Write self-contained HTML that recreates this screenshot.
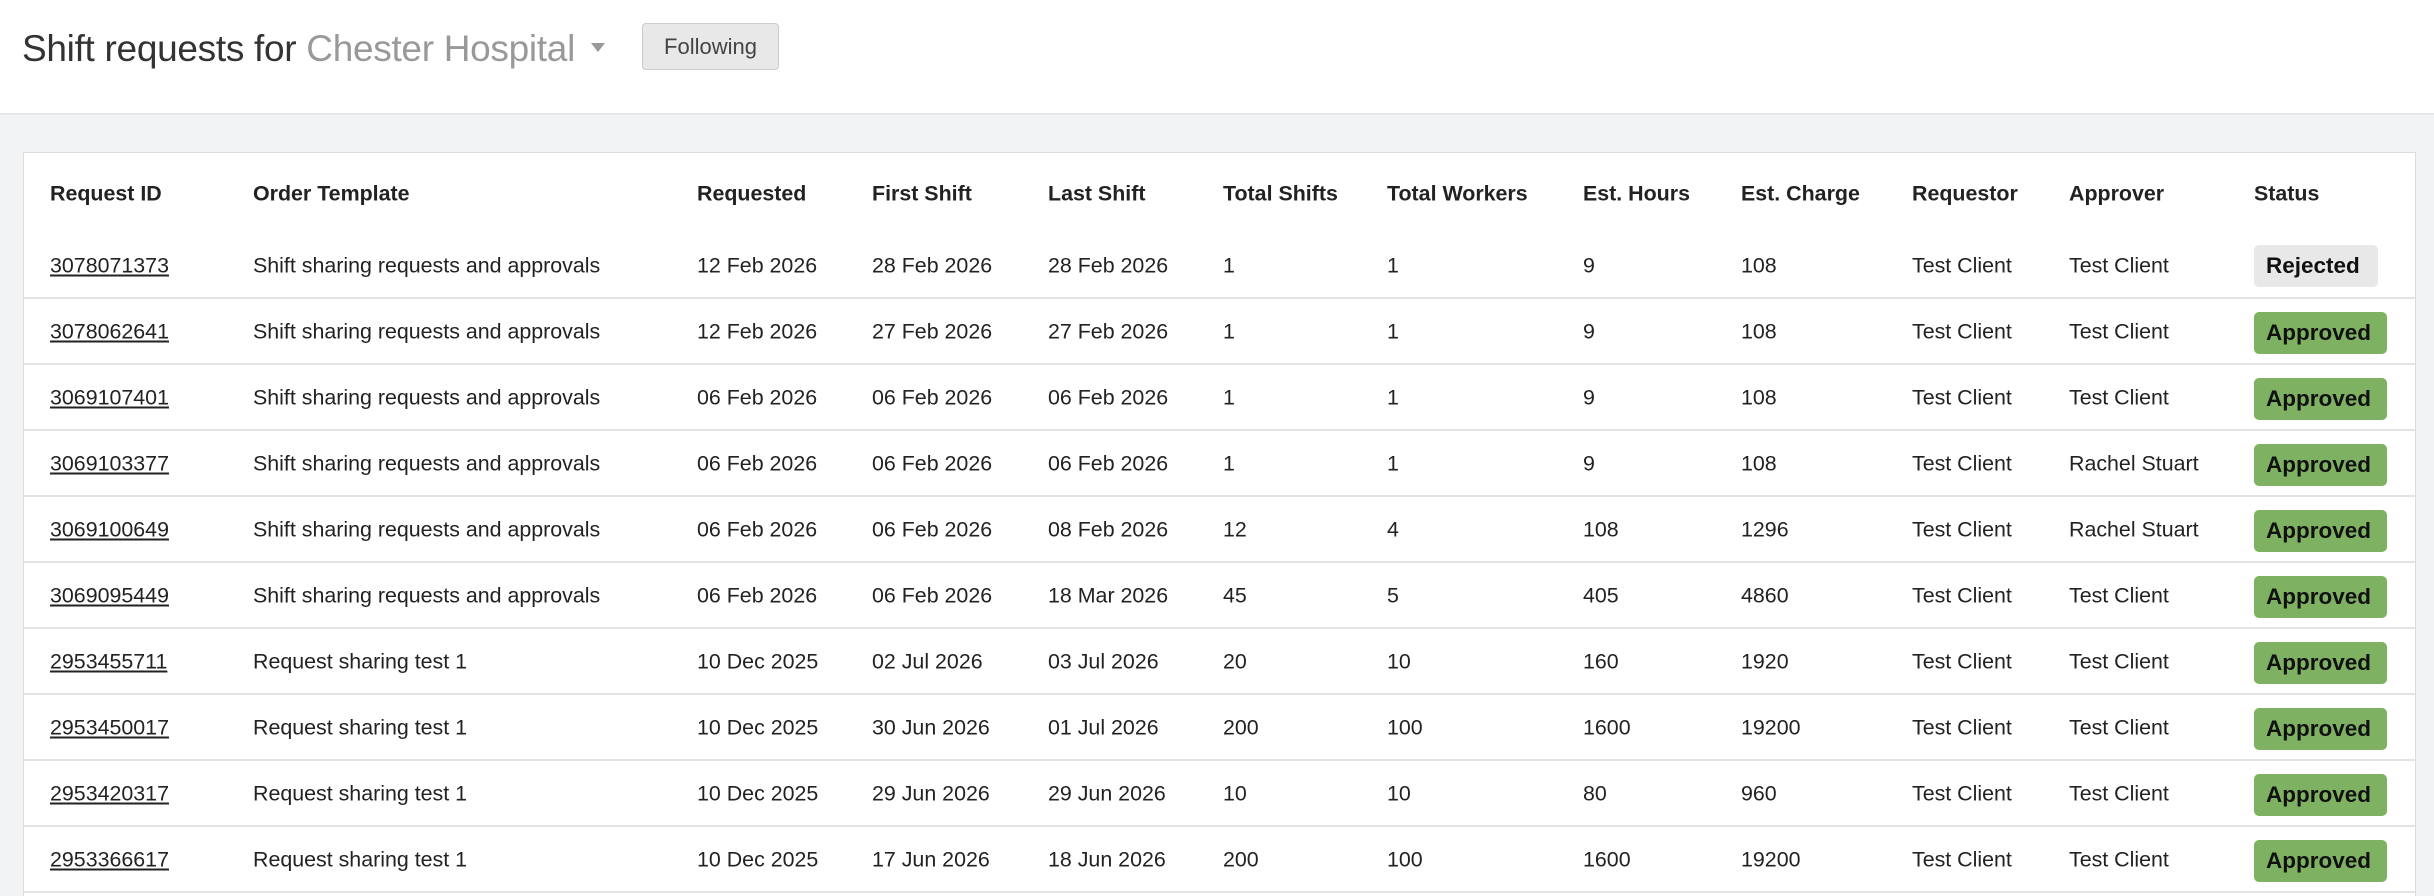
<!DOCTYPE html>
<html><head><meta charset="utf-8"><style>
*{margin:0;padding:0;box-sizing:border-box}
html,body{width:2434px;height:896px;overflow:hidden}
body{background:#f2f3f5;font-family:"Liberation Sans",Arial,sans-serif;color:#222;position:relative}
.hdr{position:absolute;left:0;top:0;width:2434px;height:115px;background:#fff;border-bottom:2px solid #e6e7e9}
.title{position:absolute;left:22px;top:28px;font-size:37px;color:#333;white-space:nowrap;letter-spacing:-0.3px}
.title span{color:#999}
.caret{position:absolute;left:591px;top:43px;width:0;height:0;border-left:7px solid transparent;border-right:7px solid transparent;border-top:9px solid #999}
.btn{position:absolute;left:642px;top:23px;width:137px;height:47px;background:#e8e8e8;border:1px solid #ccc;border-radius:4px;font-size:22px;color:#444;text-align:center;line-height:45px}
.card{position:absolute;left:23px;top:152px;width:2393px;height:760px;background:#fff;border:1px solid #dcdcdc}
.c{position:absolute;white-space:nowrap;font-size:21.4px;transform:translateY(-50%)}
.h{font-weight:bold;color:#222}
.u{text-decoration:underline}
.line{position:absolute;left:24px;width:2391px;height:2px;background:#e4e4e4}
.b{position:absolute;height:42px;line-height:42px;border-radius:5px;font-size:22.5px;font-weight:bold;padding:0 12px;color:#111}
.ap{background:#7eb162;width:133px}
.rj{background:#e8e8e8;width:124px}
</style></head><body>
<div class="hdr">
<div class="title">Shift requests for <span>Chester Hospital</span></div>
<div class="caret"></div>
<div class="btn">Following</div>
</div>
<div class="card"></div>
<div id="t"></div>
<script>
var xs=[50,253,697,872,1048,1223,1387,1583,1741,1912,2069,2254];
var hd=["Request ID","Order Template","Requested","First Shift","Last Shift","Total Shifts","Total Workers","Est. Hours","Est. Charge","Requestor","Approver","Status"];
var S="Shift sharing requests and approvals",R="Request sharing test 1",T="Test Client",RS="Rachel Stuart";
var rows=[
["3078071373",S,"12 Feb 2026","28 Feb 2026","28 Feb 2026","1","1","9","108",T,T,"Rejected"],
["3078062641",S,"12 Feb 2026","27 Feb 2026","27 Feb 2026","1","1","9","108",T,T,"Approved"],
["3069107401",S,"06 Feb 2026","06 Feb 2026","06 Feb 2026","1","1","9","108",T,T,"Approved"],
["3069103377",S,"06 Feb 2026","06 Feb 2026","06 Feb 2026","1","1","9","108",T,RS,"Approved"],
["3069100649",S,"06 Feb 2026","06 Feb 2026","08 Feb 2026","12","4","108","1296",T,RS,"Approved"],
["3069095449",S,"06 Feb 2026","06 Feb 2026","18 Mar 2026","45","5","405","4860",T,T,"Approved"],
["2953455711",R,"10 Dec 2025","02 Jul 2026","03 Jul 2026","20","10","160","1920",T,T,"Approved"],
["2953450017",R,"10 Dec 2025","30 Jun 2026","01 Jul 2026","200","100","1600","19200",T,T,"Approved"],
["2953420317",R,"10 Dec 2025","29 Jun 2026","29 Jun 2026","10","10","80","960",T,T,"Approved"],
["2953366617",R,"10 Dec 2025","17 Jun 2026","18 Jun 2026","200","100","1600","19200",T,T,"Approved"]];
var h="";
hd.forEach(function(t,i){h+='<div class="c h" style="left:'+xs[i]+'px;top:194px">'+t+'</div>';});
rows.forEach(function(r,j){var y=266+j*66;
r.forEach(function(t,i){
if(i==11){h+='<div class="b '+(t=="Approved"?"ap":"rj")+'" style="left:'+xs[i]+'px;top:'+(y-21+(j==0?0:1))+'px">'+t+'</div>';}
else h+='<div class="c'+(i==0?' u':'')+'" style="left:'+xs[i]+'px;top:'+y+'px">'+t+'</div>';});
h+='<div class="line" style="top:'+(y+31)+'px"></div>';});
document.getElementById("t").innerHTML=h;
</script>
</body></html>
